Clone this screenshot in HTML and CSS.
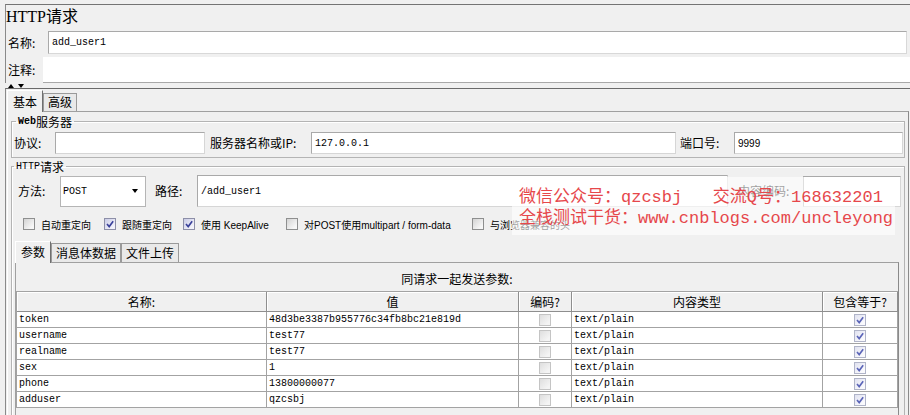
FILE: index.html
```html
<!DOCTYPE html>
<html lang="zh">
<head>
<meta charset="utf-8">
<title>HTTP请求</title>
<link rel="stylesheet" href="styles.css">
</head>
<body>
<div class="top">
  <div class="title">HTTP请求</div>
  <div class="row name-row"><span class="lbl">名称:</span><div class="input mono">add_user1</div></div>
  <div class="row comment-row"><span class="lbl lbl-c">注释:</span><div class="textarea"></div></div>
</div>
<div class="splitter"><span class="tri up"></span><span class="tri down"></span></div>
<div class="lower">
  <div class="tabs">
    <div class="tab active">基本</div>
    <div class="tab">高级</div>
  </div>
  <div class="tab-body">
    <fieldset class="group web">
      <legend><span class="mono-s bold">Web</span>服务器</legend>
      <div class="web-row">
        <span class="lbl w36">协议:</span>
        <div class="box in-proto"></div>
        <span class="lbl w95">服务器名称或IP:</span>
        <div class="box in-host mono">127.0.0.1</div>
        <span class="lbl w48">端口号:</span>
        <div class="box in-port">9999</div>
      </div>
    </fieldset>
    <fieldset class="group http">
      <legend><span class="mono-s">HTTP</span>请求</legend>
      <div class="path-row">
        <span class="lbl w36">方法:</span>
        <div class="select mono"><span>POST</span><span class="caret"></span></div>
        <span class="lbl w36 ml9">路径:</span>
        <div class="box in-path mono">/add_user1</div>
        <span class="lbl w60">内容编码:</span>
        <div class="box in-enc"></div>
      </div>
      <div class="opts">
        <label class="opt"><span class="cb"></span>自动重定向</label>
        <label class="opt"><span class="cb on"><svg viewBox="0 0 10 10"><path d="M2 5 L4.2 7.6 L8.2 2.2"/></svg></span>跟随重定向</label>
        <label class="opt"><span class="cb on"><svg viewBox="0 0 10 10"><path d="M2 5 L4.2 7.6 L8.2 2.2"/></svg></span>使用 KeepAlive</label>
        <label class="opt"><span class="cb"></span>对POST使用multipart / form-data</label>
        <label class="opt"><span class="cb"></span>与浏览器兼容的头</label>
      </div>
      <div class="subtabs">
        <div class="stab active">参数</div>
        <div class="stab">消息体数据</div>
        <div class="stab">文件上传</div>
      </div>
      <div class="subtab-body">
        <div class="caption">同请求一起发送参数:</div>
        <div class="grid">
          <div class="th">名称:</div><div class="th">值</div><div class="th">编码?</div><div class="th">内容类型</div><div class="th">包含等于?</div>

          <div class="td">token</div><div class="td">48d3be3387b955776c34fb8bc21e819d</div><div class="td c"><span class="tcb"></span></div><div class="td">text/plain</div><div class="td c"><span class="tcb on"><svg viewBox="0 0 10 10"><path d="M2 5 L4.2 7.6 L8.2 2.2"/></svg></span></div>

          <div class="td">username</div><div class="td">test77</div><div class="td c"><span class="tcb"></span></div><div class="td">text/plain</div><div class="td c"><span class="tcb on"><svg viewBox="0 0 10 10"><path d="M2 5 L4.2 7.6 L8.2 2.2"/></svg></span></div>

          <div class="td">realname</div><div class="td">test77</div><div class="td c"><span class="tcb"></span></div><div class="td">text/plain</div><div class="td c"><span class="tcb on"><svg viewBox="0 0 10 10"><path d="M2 5 L4.2 7.6 L8.2 2.2"/></svg></span></div>

          <div class="td">sex</div><div class="td">1</div><div class="td c"><span class="tcb"></span></div><div class="td">text/plain</div><div class="td c"><span class="tcb on"><svg viewBox="0 0 10 10"><path d="M2 5 L4.2 7.6 L8.2 2.2"/></svg></span></div>

          <div class="td">phone</div><div class="td">13800000077</div><div class="td c"><span class="tcb"></span></div><div class="td">text/plain</div><div class="td c"><span class="tcb on"><svg viewBox="0 0 10 10"><path d="M2 5 L4.2 7.6 L8.2 2.2"/></svg></span></div>

          <div class="td">adduser</div><div class="td">qzcsbj</div><div class="td c"><span class="tcb"></span></div><div class="td">text/plain</div><div class="td c"><span class="tcb on"><svg viewBox="0 0 10 10"><path d="M2 5 L4.2 7.6 L8.2 2.2"/></svg></span></div>
        </div>
      </div>
    </fieldset>
  </div>
</div>
<div class="watermark">
  <div class="wm-line">微信公众号：<span class="wm-a">qzcsbj   </span>交流<span class="wm-a">Q</span>号：<span class="wm-a">168632201</span></div>
  <div class="wm-line">全栈测试干货：<span class="wm-a">www.cnblogs.com/uncleyong</span></div>
</div>
</body>
</html>
```

FILE: styles.css
```css
* { box-sizing: border-box; }
html, body { margin: 0; padding: 0; }
body {
  width: 910px;
  height: 415px;
  overflow: hidden;
  position: relative;
  background: #f0f0f0;
  color: #000;
  font-family: "Noto Sans CJK SC", sans-serif;
  font-size: 12px;
}

.mono { font-family: "Liberation Mono", "Noto Sans CJK SC", monospace; font-size: 10px; }
.mono-s { font-family: "Liberation Mono", monospace; font-size: 10px; }
.bold { font-weight: bold; }

/* top section */
.top {
  margin: 4px 0 0 5px;
  border-top: 1px solid #747474;
  border-left: 1px solid #8a8a8a;
}
.title {
  height: 24px;
  line-height: 24px;
  font-family: "Liberation Serif", "Noto Sans CJK SC", serif;
  font-size: 16px;
}
.row { display: flex; align-items: center; }
.lbl { flex: none; white-space: nowrap; line-height: 14px; }
.name-row { height: 27px; padding: 2px 0 2px 2px; }
.name-row .lbl { width: 40px; }
.input {
  flex: 1;
  height: 23px;
  margin-right: 3px;
  background: #fff;
  border: 1px solid #a9a9a9;
  border-right-color: #d8d8d8;
  border-bottom-color: #d8d8d8;
  padding-left: 3px;
  display: flex;
  align-items: center;
}
.comment-row { height: 27px; padding-left: 2px; align-items: stretch; }
.lbl-c { width: 35px; display: flex; align-items: center; }
.textarea {
  flex: 1;
  margin-top: 1px;
  background: #fff;
  border-bottom: 1px solid #a8a8a8;
}

.splitter {
  height: 5px;
  padding-left: 8px;
  display: flex;
  align-items: center;
  gap: 4px;
}
.tri { width: 0; height: 0; border-left: 3px solid transparent; border-right: 3px solid transparent; }
.tri.up { border-bottom: 4px solid #000; }
.tri.down { border-top: 4px solid #000; }

/* lower panel */
.lower {
  margin-left: 5px;
  height: 327px;
  border-top: 1px solid #6a6a6a;
  border-left: 1px solid #8a8a8a;
  overflow: hidden;
}
.tabs {
  display: flex;
  align-items: flex-end;
  height: 22px;
  padding-left: 1px;
}
.tab {
  height: 18px;
  padding: 0 4px;
  line-height: 16px;
  background: #e9e9e9;
  border: 1px solid #9a9a9a;
  border-bottom: none;
}
.tab.active {
  height: 22px;
  margin-bottom: -1px;
  padding: 0 5px;
  line-height: 21px;
  background: #f0f0f0;
  border-color: #fff #6f6f6f #f0f0f0 #fff;
  position: relative;
  z-index: 1;
}
.tab-body {
  margin: 0 1px 0 1px;
  height: 304px;
  overflow: hidden;
  border-top: 1px solid #a0a0a0;
  border-left: 1px solid #fff;
  border-right: 1px solid #8a8a8a;
  padding: 3px 3px 0 3px;
}

.group {
  margin: 0;
  min-inline-size: 0;
  border: 1px solid #b4b4b4;
  box-shadow: 1px 1px 0 #fff inset;
}
.group legend {
  margin-left: 2px;
  padding: 0 2px;
  height: 13px;
  line-height: 13px;
  font-size: 12px;
  display: flex;
  align-items: center;
}
.web { padding: 4px 1px 3px 2px; }
.web-row { display: flex; align-items: center; height: 22px; }
.box {
  height: 100%;
  background: #fff;
  border: 1px solid #a9a9a9;
  border-right-color: #d6d6d6;
  border-bottom-color: #d6d6d6;
  display: flex;
  align-items: center;
  padding-left: 3px;
}
.w36 { width: 36px; }
.w48 { width: 48px; }
.w60 { width: 60px; }
.w95 { width: 95px; }
.in-proto { width: 150px; margin: 0 5px; }
.in-host { flex: 1; margin: 0 4px 0 6px; }
.in-port { width: 169px; margin-left: 6px; font-family: "Liberation Sans", sans-serif; font-size: 10px; }

.http { margin-top: 2px; padding: 2px 0 0 0; height: 258px; }
.path-row {
  display: flex;
  align-items: center;
  height: 32px;
  padding: 0 3px 0 6px;
}
.select {
  width: 86px;
  height: 31px;
  margin-left: 6px;
  background: #fff;
  border: 1px solid #b5b5b5;
  display: flex;
  align-items: center;
  padding: 0 7px 0 2px;
}
.caret {
  margin-left: auto;
  width: 0;
  height: 0;
  border-left: 3px solid transparent;
  border-right: 3px solid transparent;
  border-top: 4px solid #000;
}
.ml9 { margin-left: 9px; }
.in-path { flex: 1; margin: 0 10px 0 6px; }
.in-enc { width: 98px; height: 31px; margin-left: 5px; }

.opts {
  display: grid;
  grid-template-columns: 81px 79px 103px 186px 1fr;
  align-items: center;
  height: 16px;
  margin-top: 9px;
  padding-left: 11px;
  font-family: "Liberation Sans", "Noto Sans CJK SC", sans-serif;
  font-size: 10px;
  white-space: nowrap;
}
.opt { display: flex; align-items: center; gap: 6px; }
.cb {
  flex: none;
  width: 12px;
  height: 12px;
  border: 1px solid #8e8f8f;
  background: linear-gradient(135deg, #d3d3d3, #f7f7f7 80%);
  display: flex;
  align-items: center;
  justify-content: center;
}
.cb.on { background: linear-gradient(135deg, #c9cbe6, #f2f2fa 80%); border-color: #8d8fa8; }
.cb svg, .tcb svg { width: 10px; height: 10px; }
.cb path, .tcb path { fill: none; stroke: #39409a; stroke-width: 1.6; }

.subtabs {
  display: flex;
  align-items: flex-end;
  height: 21px;
  margin: 9px 0 0 3px;
}
.stab {
  height: 19px;
  padding: 0 4px;
  line-height: 17px;
  background: #e9e9e9;
  border: 1px solid #9a9a9a;
  border-bottom: none;
  white-space: nowrap;
}
.stab.active {
  height: 22px;
  margin-bottom: -1px;
  padding: 0 5px;
  line-height: 19px;
  background: #f0f0f0;
  border-color: #fff #6f6f6f #f0f0f0 #fff;
  position: relative;
  z-index: 1;
}
.subtab-body {
  margin: 0 5px 0 3px;
  height: 155px;
  border-top: 1px solid #a0a0a0;
  border-left: 1px solid #a0a0a0;
  border-right: 1px solid #8a8a8a;
}
.caption {
  margin-top: 7px;
  height: 18px;
  line-height: 18px;
  text-align: center;
  font-size: 12px;
}
.grid {
  margin-top: 3px;
  display: grid;
  grid-template-columns: 250px 252px 53px 251px 75px;
  grid-template-rows: 20px;
  grid-auto-rows: 16px;
  border-top: 1px solid #a3a3a3;
  border-left: 1px solid #a3a3a3;
  width: 882px;
}
.th {
  height: 20px;
  line-height: 19px;
  text-align: center;
  font-size: 12px;
  background: #f0f0f0;
  border-right: 1px solid #8e8e8e;
  border-bottom: 1px solid #8e8e8e;
  box-shadow: 1px 1px 0 #fff inset;
}
.td {
  height: 16px;
  background: #fff;
  border-right: 1px solid #a3a3a3;
  border-bottom: 1px solid #a3a3a3;
  padding-left: 2px;
  font-family: "Liberation Mono", monospace;
  font-size: 10px;
  line-height: 15px;
  white-space: nowrap;
  overflow: hidden;
}
.td.c { display: flex; align-items: center; justify-content: center; padding-left: 0; }
.tcb {
  width: 12px;
  height: 12px;
  border: 1px solid #c4c4c4;
  background: linear-gradient(135deg, #dedede, #f4f4f4 80%);
  display: flex;
  align-items: center;
  justify-content: center;
}
.tcb.on { border-color: #b0b4c8; background: linear-gradient(135deg, #e0e2f0, #fafafd 80%); }
.tcb.on path { stroke: #5a64b8; }

/* watermark overlay */
.watermark {
  position: absolute;
  left: 512px;
  top: 177px;
  width: 383px;
  height: 58px;
  background: rgba(255, 255, 255, 0.62);
  padding: 7px 0 0 7px;
  color: #e6474b;
  font-family: "Noto Sans CJK SC", sans-serif;
  font-size: 17px;
}
.wm-line { height: 21px; line-height: 21px; white-space: pre; }
.wm-a { font-family: "Liberation Mono", monospace; font-size: 17px; }
```
